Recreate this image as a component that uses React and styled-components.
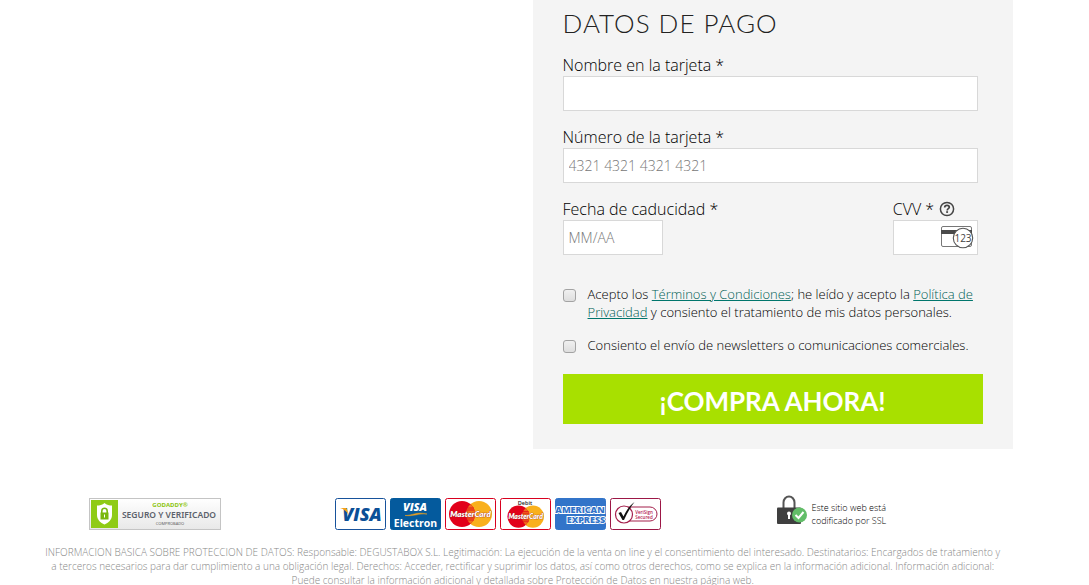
import React, { useState } from 'react';
import styled, { createGlobalStyle } from 'styled-components';

const GlobalStyle = createGlobalStyle`
  * {
    box-sizing: border-box;
  }

  body {
    margin: 0;
    background: #fff;
    color: #000;
    font-family: 'Open Sans', sans-serif;
    font-weight: 300;
    font-size: 16px;
  }
`;

const Page = styled.div`
  padding: 0 7% 0 3%;
`;

const Container = styled.div`
  max-width: 980px;
  margin: 0 auto;
`;

const PaymentPanel = styled.form`
  width: 49%;
  min-width: 440px;
  margin-left: auto;
  padding: 7px 30px 25px;
  background: #f4f4f4;
`;

const Title = styled.h2`
  margin: 0 0 15px;
  color: #222;
  font-family: Lato, sans-serif;
  font-weight: 300;
  font-size: 26px;
  line-height: 32px;
  letter-spacing: 1px;
  text-transform: uppercase;
`;

const Fields = styled.div`
  margin-right: 5px;
`;

const FieldRow = styled.div`
  display: flex;
  justify-content: space-between;
`;

const Field = styled.div`
  width: ${({ $width }) => $width || '100%'};
  margin-bottom: 15px;
  white-space: nowrap;
`;

const Label = styled.label`
  display: inline-block;
  line-height: 22px;
  vertical-align: top;
`;

const HelpButton = styled.button`
  margin-left: 5px;
  padding: 3px 0 0;
  border: none;
  background: none;
  color: #444;
  line-height: 0;
  vertical-align: top;
  cursor: pointer;
`;

const Input = styled.input`
  display: block;
  width: 100%;
  height: 35px;
  padding: 0 5px;
  border: 1px solid #d8d8d8;
  border-radius: 0;
  background: #fff;
  font-family: inherit;
  font-weight: 300;
  font-size: 14px;

  &::placeholder {
    color: #777;
  }
`;

const CvvBox = styled.div`
  display: flex;
  align-items: center;
  height: 35px;
  padding-right: 3px;
  border: 1px solid #d8d8d8;
  background: #fff;

  input {
    flex: 1;
    min-width: 0;
    height: 33px;
    border: none;
  }

  svg {
    flex: none;
  }
`;

const Consents = styled.div`
  display: grid;
  gap: 15px;
  padding: 15px 0 20px;
`;

const Consent = styled.div`
  display: flex;
  align-items: flex-start;
  gap: 12px;
  font-size: 13px;
  line-height: 18px;

  a {
    color: #005f56;
    text-decoration-color: #00766c;
  }
`;

const Checkbox = styled.input`
  appearance: none;
  flex: none;
  width: 13px;
  height: 13px;
  margin: 4px 0 0;
  border: 1px solid #a3a3a3;
  border-radius: 3px;
  background: linear-gradient(#f0f0f0, #dedede);

  &:checked {
    background: #00766c;
  }
`;

const BuyButton = styled.button`
  display: block;
  width: 100%;
  height: 50px;
  padding: 3px 0 0;
  border: none;
  background: #a8e000;
  color: #fff;
  font-family: Lato, sans-serif;
  font-weight: 700;
  font-size: 26px;
  text-transform: uppercase;
  cursor: pointer;
`;

const Seals = styled.div`
  display: grid;
  grid-template-columns: 25% 45% 23%;
  justify-items: center;
  align-items: center;
  margin-top: 45px;
  height: 40px;

  svg {
    display: block;
  }
`;

const Cards = styled.div`
  display: flex;
  gap: 4px;
`;

const Ssl = styled.div`
  display: flex;
  align-items: flex-start;
  gap: 5px;
  font-size: 9px;
  line-height: 13px;
  color: #000;

  p {
    margin: 6px 0 0;
    white-space: nowrap;
  }
`;

const Legal = styled.p`
  margin: 11px 0 0;
  padding: 0 10px;
  color: #888;
  font-size: 10px;
  line-height: 14px;
  text-align: center;
`;

const HelpIcon = () => (
  <svg width="16" height="16" viewBox="0 0 16 16" fill="none" stroke="currentColor">
    <circle cx="8" cy="8" r="6.6" strokeWidth="1.5" />
    <path d="M5.7 6.400c0-1.300 1-2.100 2.300-2.100s2.300.7 2.300 1.900c0 1.500-2.100 1.400-2.100 3.200" strokeWidth="1.7" />
    <path d="M8.1 10.200v1.700" strokeWidth="1.9" />
  </svg>
);

const CvvIcon = () => (
  <svg width="33" height="24" viewBox="0 0 33 24">
    <rect x="0.5" y="0.5" width="30" height="20" rx="1.5" fill="#fff" stroke="#777" />
    <path d="M0 4h31v4H0z" fill="#4a4a4a" />
    <circle cx="22" cy="12" r="9.7" fill="#fff" stroke="#555" strokeWidth="1.1" />
    <text x="22" y="15.5" textAnchor="middle" fontFamily="Open Sans, sans-serif" fontWeight="500" fontSize="10" fill="#444">
      123
    </text>
  </svg>
);

const GodaddySeal = () => (
  <svg width="132" height="32" viewBox="0 0 132 32">
    <defs>
      <linearGradient id="seal" x2="0" y2="1">
        <stop offset="0" stopColor="#fff" />
        <stop offset="1" stopColor="#e8e8e8" />
      </linearGradient>
    </defs>
    <rect x="0.5" y="0.5" width="131" height="31" fill="url(#seal)" stroke="#c4c4c4" />
    <rect x="2" y="2" width="27" height="28" fill="#8fcb16" />
    <path d="M15.500 5c2 2 5 2.500 7.500 2.500V17c0 4.500-3.500 8-7.500 9.500C11.500 25 8 21.500 8 17V7.500C10.500 7.500 13.500 7 15.500 5z" fill="#fff" />
    <path d="M12.800 15v-2a2.700 2.700 0 0 1 5.400 0v2" fill="none" stroke="#7ab80e" strokeWidth="1.600" />
    <rect x="11.500" y="14.500" width="8" height="7" fill="#7ab80e" />
    <path d="M15 16.500h1v3h-1z" fill="#fff" />
    <text x="81" y="9" textAnchor="middle" fontFamily="Open Sans, sans-serif" fontWeight="700" fontSize="6" fill="#8ac40c">
      GODADDY®
    </text>
    <text x="80" y="20" textAnchor="middle" fontFamily="Noto Sans, sans-serif" fontWeight="600" fontSize="8.500" fill="#5b616b">
      SEGURO Y VERIFICADO
    </text>
    <text x="81" y="27" textAnchor="middle" fontFamily="Open Sans, sans-serif" fontWeight="400" fontSize="4" fill="#555">
      COMPROBADO
    </text>
  </svg>
);

const CardFrame = ({ fill = '#fff', stroke, label, children }) => (
  <svg width="51" height="32" viewBox="0 0 51 32" role="img" aria-label={label}>
    <rect x="0.5" y="0.5" width="50" height="31" rx="2" fill={fill} stroke={stroke} />
    {children}
  </svg>
);

const cardText = {
  textAnchor: 'middle',
  fontFamily: 'Open Sans, sans-serif',
  fontWeight: 800,
};

const VisaCard = () => (
  <CardFrame stroke="#17529b" label="Visa">
    <text x="27" y="22.500" {...cardText} fontStyle="italic" fontSize="18" fill="#0b4f97">
      VISA
    </text>
    <path d="M5 10h5c1.500 0 2 .6 2.300 2l1.200 5C12 13.500 9 11.200 5 10z" fill="#f5a31a" />
  </CardFrame>
);

const VisaElectronCard = () => (
  <CardFrame fill="#045a9d" stroke="#045a9d" label="Visa Electron">
    <text x="25" y="12.500" {...cardText} fontStyle="italic" fontSize="11" fill="#fff">
      VISA
    </text>
    <path d="M15 17.500c8 0 11-4 22-1.500-9-.8-12 2.500-22 1.500z" fill="#f5a31a" stroke="#f5a31a" strokeWidth="0.5" />
    <text x="25.500" y="28.500" {...cardText} fontWeight="700" fontSize="10.500" fill="#fff">
      Electron
    </text>
  </CardFrame>
);

const MasterCard = ({ debit }) => (
  <CardFrame stroke="#d8001f" label={debit ? 'MasterCard Debit' : 'MasterCard'}>
    {debit && (
      <text x="25" y="7" {...cardText} fontWeight="600" fontSize="5.500" fill="#222">
        Debit
      </text>
    )}
    <g transform={debit ? 'translate(4 5) scale(.85)' : undefined}>
      <circle cx="34" cy="16" r="13" fill="#f9b01c" />
      <circle cx="17" cy="16" r="13" fill="#e2001a" />
      <path d="M25.500 6.200a13 13 0 0 1 0 19.600 13 13 0 0 1 0-19.600z" fill="#f0701c" />
      <path d="M22 10h7M21.500 12h8M21.500 20h8M22 22h7" stroke="#e2001a" strokeWidth="0.800" />
      <text x="25.500" y="19" {...cardText} fontFamily="Lato, sans-serif" fontStyle="italic" fontSize="8" fill="#fff" stroke="#a02a26" strokeWidth="0.700" paintOrder="stroke">
        MasterCard
      </text>
    </g>
  </CardFrame>
);

const AmexCard = () => (
  <CardFrame fill="#3274c9" stroke="#3274c9" label="American Express">
    <g {...cardText} fontSize="9" fill="#3274c9" stroke="#fff" strokeWidth="1.800" paintOrder="stroke">
      <text x="25" y="14.500">AMERICAN</text>
      <text x="31" y="25">EXPRESS</text>
    </g>
  </CardFrame>
);

const VerisignCard = () => (
  <CardFrame stroke="#9c1746" label="VeriSign Secured">
    <rect x="6" y="9" width="41" height="14" rx="7" fill="none" stroke="#a31f4b" />
    <circle cx="14" cy="16.500" r="8.500" fill="#fff" stroke="#a31f4b" strokeWidth="1.200" />
    <path d="M8.500 15l2.500-1 2.500 4.500C17 11 20 7.500 24.500 4 20.500 9 17 15.500 14 22h-1.500z" fill="#111" />
    <g {...cardText} fontWeight="600" fontSize="4.500" fill="#b52050">
      <text x="34" y="16">VeriSign</text>
      <text x="34" y="20.500">Secured</text>
    </g>
  </CardFrame>
);

const LockIcon = () => (
  <svg width="30" height="38" viewBox="0 0 30 38">
    <path d="M6.500 13V7.500a5.500 6 0 0 1 11 0V13" fill="none" stroke="#555" strokeWidth="2" />
    <rect x="0" y="12.500" width="24" height="16.500" rx="1" fill="#3f3f3f" />
    <circle cx="12" cy="18.500" r="2" fill="#fff" />
    <path d="M11 19h2v5h-2z" fill="#fff" />
    <circle cx="22.500" cy="20" r="7.500" fill="#62bd68" />
    <path d="M18.500 20l3 3 5-6" fill="none" stroke="#fff" strokeWidth="2" />
  </svg>
);

const App = () => {
  const [terms, setTerms] = useState(false);
  const [newsletter, setNewsletter] = useState(false);

  return (
    <Page>
      <GlobalStyle />
      <Container>
        <PaymentPanel onSubmit={(e) => e.preventDefault()}>
          <Title>Datos de pago</Title>
          <Fields>
            <Field>
              <Label htmlFor="name">Nombre en la tarjeta *</Label>
              <Input id="name" type="text" />
            </Field>
            <Field>
              <Label htmlFor="number">Número de la tarjeta *</Label>
              <Input id="number" type="text" placeholder="4321 4321 4321 4321" />
            </Field>
            <FieldRow>
              <Field $width="100px">
                <Label htmlFor="expiry">Fecha de caducidad *</Label>
                <Input id="expiry" type="text" placeholder="MM/AA" />
              </Field>
              <Field $width="85px">
                <Label htmlFor="cvv">CVV *</Label>
                <HelpButton type="button" aria-label="Ayuda CVV">
                  <HelpIcon />
                </HelpButton>
                <CvvBox>
                  <Input id="cvv" type="text" />
                  <CvvIcon />
                </CvvBox>
              </Field>
            </FieldRow>
          </Fields>
          <Consents>
            <Consent>
              <Checkbox id="terms" type="checkbox" checked={terms} onChange={() => setTerms(!terms)} />
              <label htmlFor="terms">
                Acepto los <a href="#terminos">Términos y Condiciones</a>; he leído y acepto la{' '}
                <a href="#privacidad">Política de Privacidad</a> y consiento el tratamiento de mis datos personales.
              </label>
            </Consent>
            <Consent>
              <Checkbox
                id="newsletter"
                type="checkbox"
                checked={newsletter}
                onChange={() => setNewsletter(!newsletter)}
              />
              <label htmlFor="newsletter">Consiento el envío de newsletters o comunicaciones comerciales.</label>
            </Consent>
          </Consents>
          <BuyButton type="submit">¡Compra ahora!</BuyButton>
        </PaymentPanel>

        <Seals>
          <GodaddySeal />
          <Cards>
            <VisaCard />
            <VisaElectronCard />
            <MasterCard />
            <MasterCard debit />
            <AmexCard />
            <VerisignCard />
          </Cards>
          <Ssl>
            <LockIcon />
            <p>
              Este sitio web está
              <br />
              codificado por SSL
            </p>
          </Ssl>
        </Seals>

        <Legal>
          INFORMACION BASICA SOBRE PROTECCION DE DATOS: Responsable: DEGUSTABOX S.L. Legitimación: La ejecución de la
          venta on line y el consentimiento del interesado. Destinatarios: Encargados de tratamiento y a terceros
          necesarios para dar cumplimiento a una obligación legal. Derechos: Acceder, rectificar y suprimir los datos,
          así como otros derechos, como se explica en la información adicional. Información adicional: Puede consultar
          la información adicional y detallada sobre Protección de Datos en nuestra página web.
        </Legal>
      </Container>
    </Page>
  );
};

export default App;
